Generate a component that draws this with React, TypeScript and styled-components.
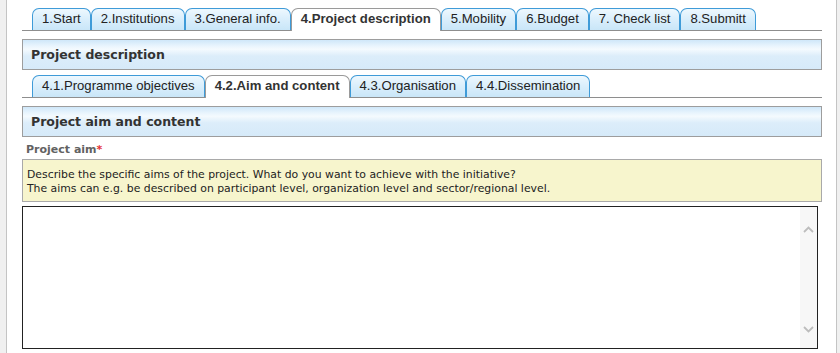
import React from "react";
import styled, { createGlobalStyle, css } from "styled-components";

const GlobalStyle = createGlobalStyle`
  html, body { margin: 0; padding: 0; background: #f0f0f0; }
  body { font-family: "DejaVu Sans", Verdana, sans-serif; }
  * { box-sizing: border-box; }
`;

const Page = styled.div`
  margin-left: 6px;
  width: 831px;
  min-height: 100vh;
  background: #ffffff;
  border-left: 1px solid #c4c4c4;
  border-right: 1px solid #c4c4c4;
  padding: 8px 14px 0 15px;
`;

const TabStrip = styled.div`
  display: flex;
  align-items: flex-end;
  padding-left: 10px;
  border-bottom: 1px solid #8e8e8e;
  margin-bottom: 8px;
`;

const Tab = styled.div<{ $active?: boolean }>`
  height: 22px;
  padding: 0 9px;
  font-family: "Liberation Sans", Arial, sans-serif;
  font-size: 13.15px;
  line-height: 20px;
  white-space: nowrap;
  border: 1px solid #3f9bd8;
  border-bottom: none;
  border-radius: 7px 7px 0 0;
  color: #222;
  background: linear-gradient(to bottom, #eef8fe 0%, #dbeffc 45%, #c9e6f8 100%);
  ${(p) =>
    p.$active &&
    css`
      height: 23px;
      margin-bottom: -1px;
      border-color: #9a9a9a;
      background: #ffffff;
      font-weight: bold;
      color: #333;
    `}
`;

const SectionHeader = styled.div`
  height: 31px;
  border: 1px solid #9d9d9d;
  padding-left: 8px;
  display: flex;
  align-items: center;
  font-family: "DejaVu Sans", Verdana, sans-serif;
  font-weight: bold;
  font-size: 12.5px;
  color: #333;
  background: linear-gradient(
    to bottom,
    #cfe7f9 0%,
    #e8f4fd 20%,
    #f4fafe 32%,
    #dcedfa 55%,
    #d6eaf9 100%
  );
`;

const HeaderGap = styled.div<{ $h: number }>`
  height: ${(p) => p.$h}px;
`;

const FieldLabel = styled.div`
  margin-top: 5px;
  height: 17px;
  padding-left: 4px;
  line-height: 16px;
  font-family: "DejaVu Sans", Verdana, sans-serif;
  font-size: 11px;
  font-weight: bold;
  color: #626262;
`;

const Required = styled.span`
  color: #e43333;
`;

const HelpBox = styled.div`
  border: 1px solid #a9a9a9;
  background: #f7f5cd;
  padding: 8px 4px 5px;
  font-family: "DejaVu Sans", Verdana, sans-serif;
  font-size: 10.85px;
  line-height: 14px;
  color: #222;
`;

const InputBox = styled.div`
  margin-top: 4px;
  width: 796px;
  height: 143px;
  border: 1px solid #222;
  display: flex;
  background: #fff;
`;

const TextArea = styled.textarea`
  flex: 1;
  border: none;
  outline: none;
  resize: none;
  overflow: hidden;
  font-family: "DejaVu Sans", Verdana, sans-serif;
  font-size: 11px;
  padding: 4px;
  background: #fff;
`;

const ScrollBar = styled.div`
  width: 17px;
  background: #f7f7f7;
  display: flex;
  flex-direction: column;
  align-items: center;
  justify-content: space-between;
  padding: 19px 0 15px;
`;

const Chevron = ({ up }: { up?: boolean }) => (
  <svg width="11" height="7" viewBox="0 0 11 7">
    <polyline
      points={up ? "1,6 5.5,1.5 10,6" : "1,1 5.5,5.5 10,1"}
      fill="none"
      stroke="#bdbdbd"
      strokeWidth="1.8"
    />
  </svg>
);

const mainTabs = [
  "1.Start",
  "2.Institutions",
  "3.General info.",
  "4.Project description",
  "5.Mobility",
  "6.Budget",
  "7. Check list",
  "8.Submitt",
];

const subTabs = [
  "4.1.Programme objectives",
  "4.2.Aim and content",
  "4.3.Organisation",
  "4.4.Dissemination",
];

export default function App() {
  return (
    <>
      <GlobalStyle />
      <Page>
        <TabStrip>
          {mainTabs.map((t) => (
            <Tab key={t} $active={t === "4.Project description"}>
              {t}
            </Tab>
          ))}
        </TabStrip>
        <SectionHeader>Project description</SectionHeader>
        <HeaderGap $h={5} />
        <TabStrip>
          {subTabs.map((t) => (
            <Tab key={t} $active={t === "4.2.Aim and content"}>
              {t}
            </Tab>
          ))}
        </TabStrip>
        <SectionHeader>Project aim and content</SectionHeader>
        <FieldLabel>
          Project aim<Required>*</Required>
        </FieldLabel>
        <HelpBox>
          Describe the specific aims of the project. What do you want to achieve with the initiative?
          <br />
          The aims can e.g. be described on participant level, organization level and sector/regional level.
        </HelpBox>
        <InputBox>
          <TextArea />
          <ScrollBar>
            <Chevron up />
            <Chevron />
          </ScrollBar>
        </InputBox>
      </Page>
    </>
  );
}
